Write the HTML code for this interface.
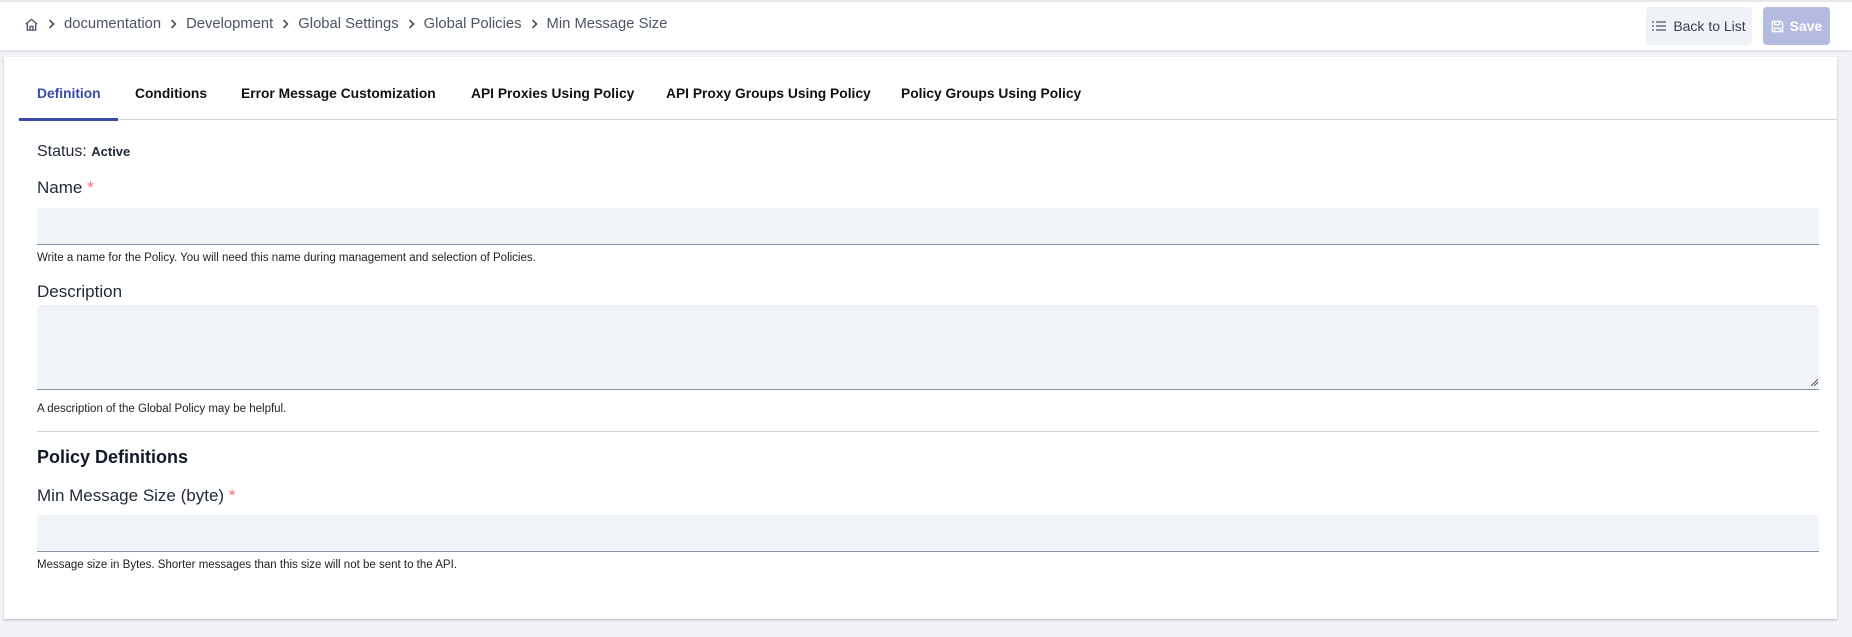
<!DOCTYPE html>
<html><head><meta charset="utf-8"><style>
*{box-sizing:border-box;margin:0;padding:0}
body{width:1852px;height:637px;background:#f0f2f6;font-family:"Liberation Sans",Arial,sans-serif;color:#1f2937;position:relative;overflow:hidden}
.hdr{position:absolute;left:0;top:0;width:1852px;height:50px;background:#fff;box-shadow:0 1px 3px rgba(0,0,0,.12);border-top:2px solid #e5e7eb}
.bc{position:absolute;left:24px;top:14px;font-size:14.8px;color:#4b5563;display:flex;align-items:center}
.bc .s{margin:0 9px;display:inline-block}
.btn{position:absolute;top:5px;height:38px;border-radius:4px;font-size:14px;display:flex;align-items:center;justify-content:center}
.card{position:absolute;left:4px;top:57px;width:1833px;height:562px;background:#fff;box-shadow:0 1px 2px rgba(0,0,0,.25)}
.a{position:absolute}
.tab{position:absolute;top:29px;font-size:13.8px;font-weight:bold;color:#111}
.lbl{position:absolute;left:33px;font-size:17px;color:#1f2937}
.req{color:#f87171}
.inp{position:absolute;left:33px;width:1782px;background:#f0f3f7;border-bottom:1px solid #8b95a8;border-radius:3px 3px 0 0}
.help{position:absolute;left:33px;font-size:11.5px;color:#222}
</style></head><body>
<div class="hdr">
<div class="bc">
<svg width="15" height="15" viewBox="0 0 16 16" fill="none" stroke="#4b5563" stroke-width="1.4"><path d="M2 7.5L8 2.5l6 5M3.5 6.3V14h9V6.3M6.5 14V10h3v4"/></svg>
<svg class="s" width="7" height="10" viewBox="0 0 7 10" fill="none" stroke="#374151" stroke-width="1.5"><path d="M1.5 1l4 4-4 4"/></svg>documentation<svg class="s" width="7" height="10" viewBox="0 0 7 10" fill="none" stroke="#374151" stroke-width="1.5"><path d="M1.5 1l4 4-4 4"/></svg>Development<svg class="s" width="7" height="10" viewBox="0 0 7 10" fill="none" stroke="#374151" stroke-width="1.5"><path d="M1.5 1l4 4-4 4"/></svg>Global Settings<svg class="s" width="7" height="10" viewBox="0 0 7 10" fill="none" stroke="#374151" stroke-width="1.5"><path d="M1.5 1l4 4-4 4"/></svg>Global Policies<svg class="s" width="7" height="10" viewBox="0 0 7 10" fill="none" stroke="#374151" stroke-width="1.5"><path d="M1.5 1l4 4-4 4"/></svg>Min Message Size</div>
<div class="btn" style="left:1646px;width:106px;background:#eff2f7;color:#374151"><svg width="14" height="12" viewBox="0 0 14 12" stroke="#4b5563" stroke-width="1.3" style="margin-right:7px"><path d="M0 2h2M4 2h10M0 6h2M4 6h10M0 10h2M4 10h10"/></svg>Back to List</div>
<div class="btn" style="left:1763px;width:67px;background:#b4bae0;color:#fff;font-weight:bold"><svg width="13" height="13" viewBox="0 0 14 14" fill="none" stroke="#fff" stroke-width="1.5" style="margin-right:6px"><path d="M1.5 1.5h9l2 2v9h-11zM4 1.5v3.5h5V1.5M4 12.5V9h6v3.5"/></svg>Save</div>
</div>
<div class="card">
<div class="tab" style="left:33px;color:#3b4aa8">Definition</div>
<div class="tab" style="left:131px">Conditions</div>
<div class="tab" style="left:237px">Error Message Customization</div>
<div class="tab" style="left:467px">API Proxies Using Policy</div>
<div class="tab" style="left:662px">API Proxy Groups Using Policy</div>
<div class="tab" style="left:897px">Policy Groups Using Policy</div>
<div class="a" style="left:14px;top:62px;width:1819px;height:1px;background:#d1d5db"></div>
<div class="a" style="left:15px;top:61px;width:99px;height:3px;background:#3b4aa8"></div>
<div class="a" style="left:33px;top:86px;font-size:16px">Status: <b style="font-size:13px">Active</b></div>
<div class="lbl" style="top:121px">Name <span class="req">*</span></div>
<div class="inp" style="top:151px;height:37px"></div>
<div class="help" style="top:195px">Write a name for the Policy. You will need this name during management and selection of Policies.</div>
<div class="lbl" style="top:225px">Description</div>
<div class="inp" style="top:248px;height:85px"></div>
<svg class="a" style="left:1806px;top:321px" width="8" height="8" viewBox="0 0 8 8" stroke="#555" stroke-width="1"><path d="M1 8L8 1M4 8L8 4"/></svg>
<div class="help" style="top:346px">A description of the Global Policy may be helpful.</div>
<div class="a" style="left:33px;top:374px;width:1782px;height:1px;background:#d1d5db"></div>
<div class="a" style="left:33px;top:390px;font-size:18px;font-weight:bold;color:#111827">Policy Definitions</div>
<div class="lbl" style="top:429px">Min Message Size (byte) <span class="req">*</span></div>
<div class="inp" style="top:458px;height:37px"></div>
<div class="help" style="top:502px">Message size in Bytes. Shorter messages than this size will not be sent to the API.</div>
</div>
</body></html>
